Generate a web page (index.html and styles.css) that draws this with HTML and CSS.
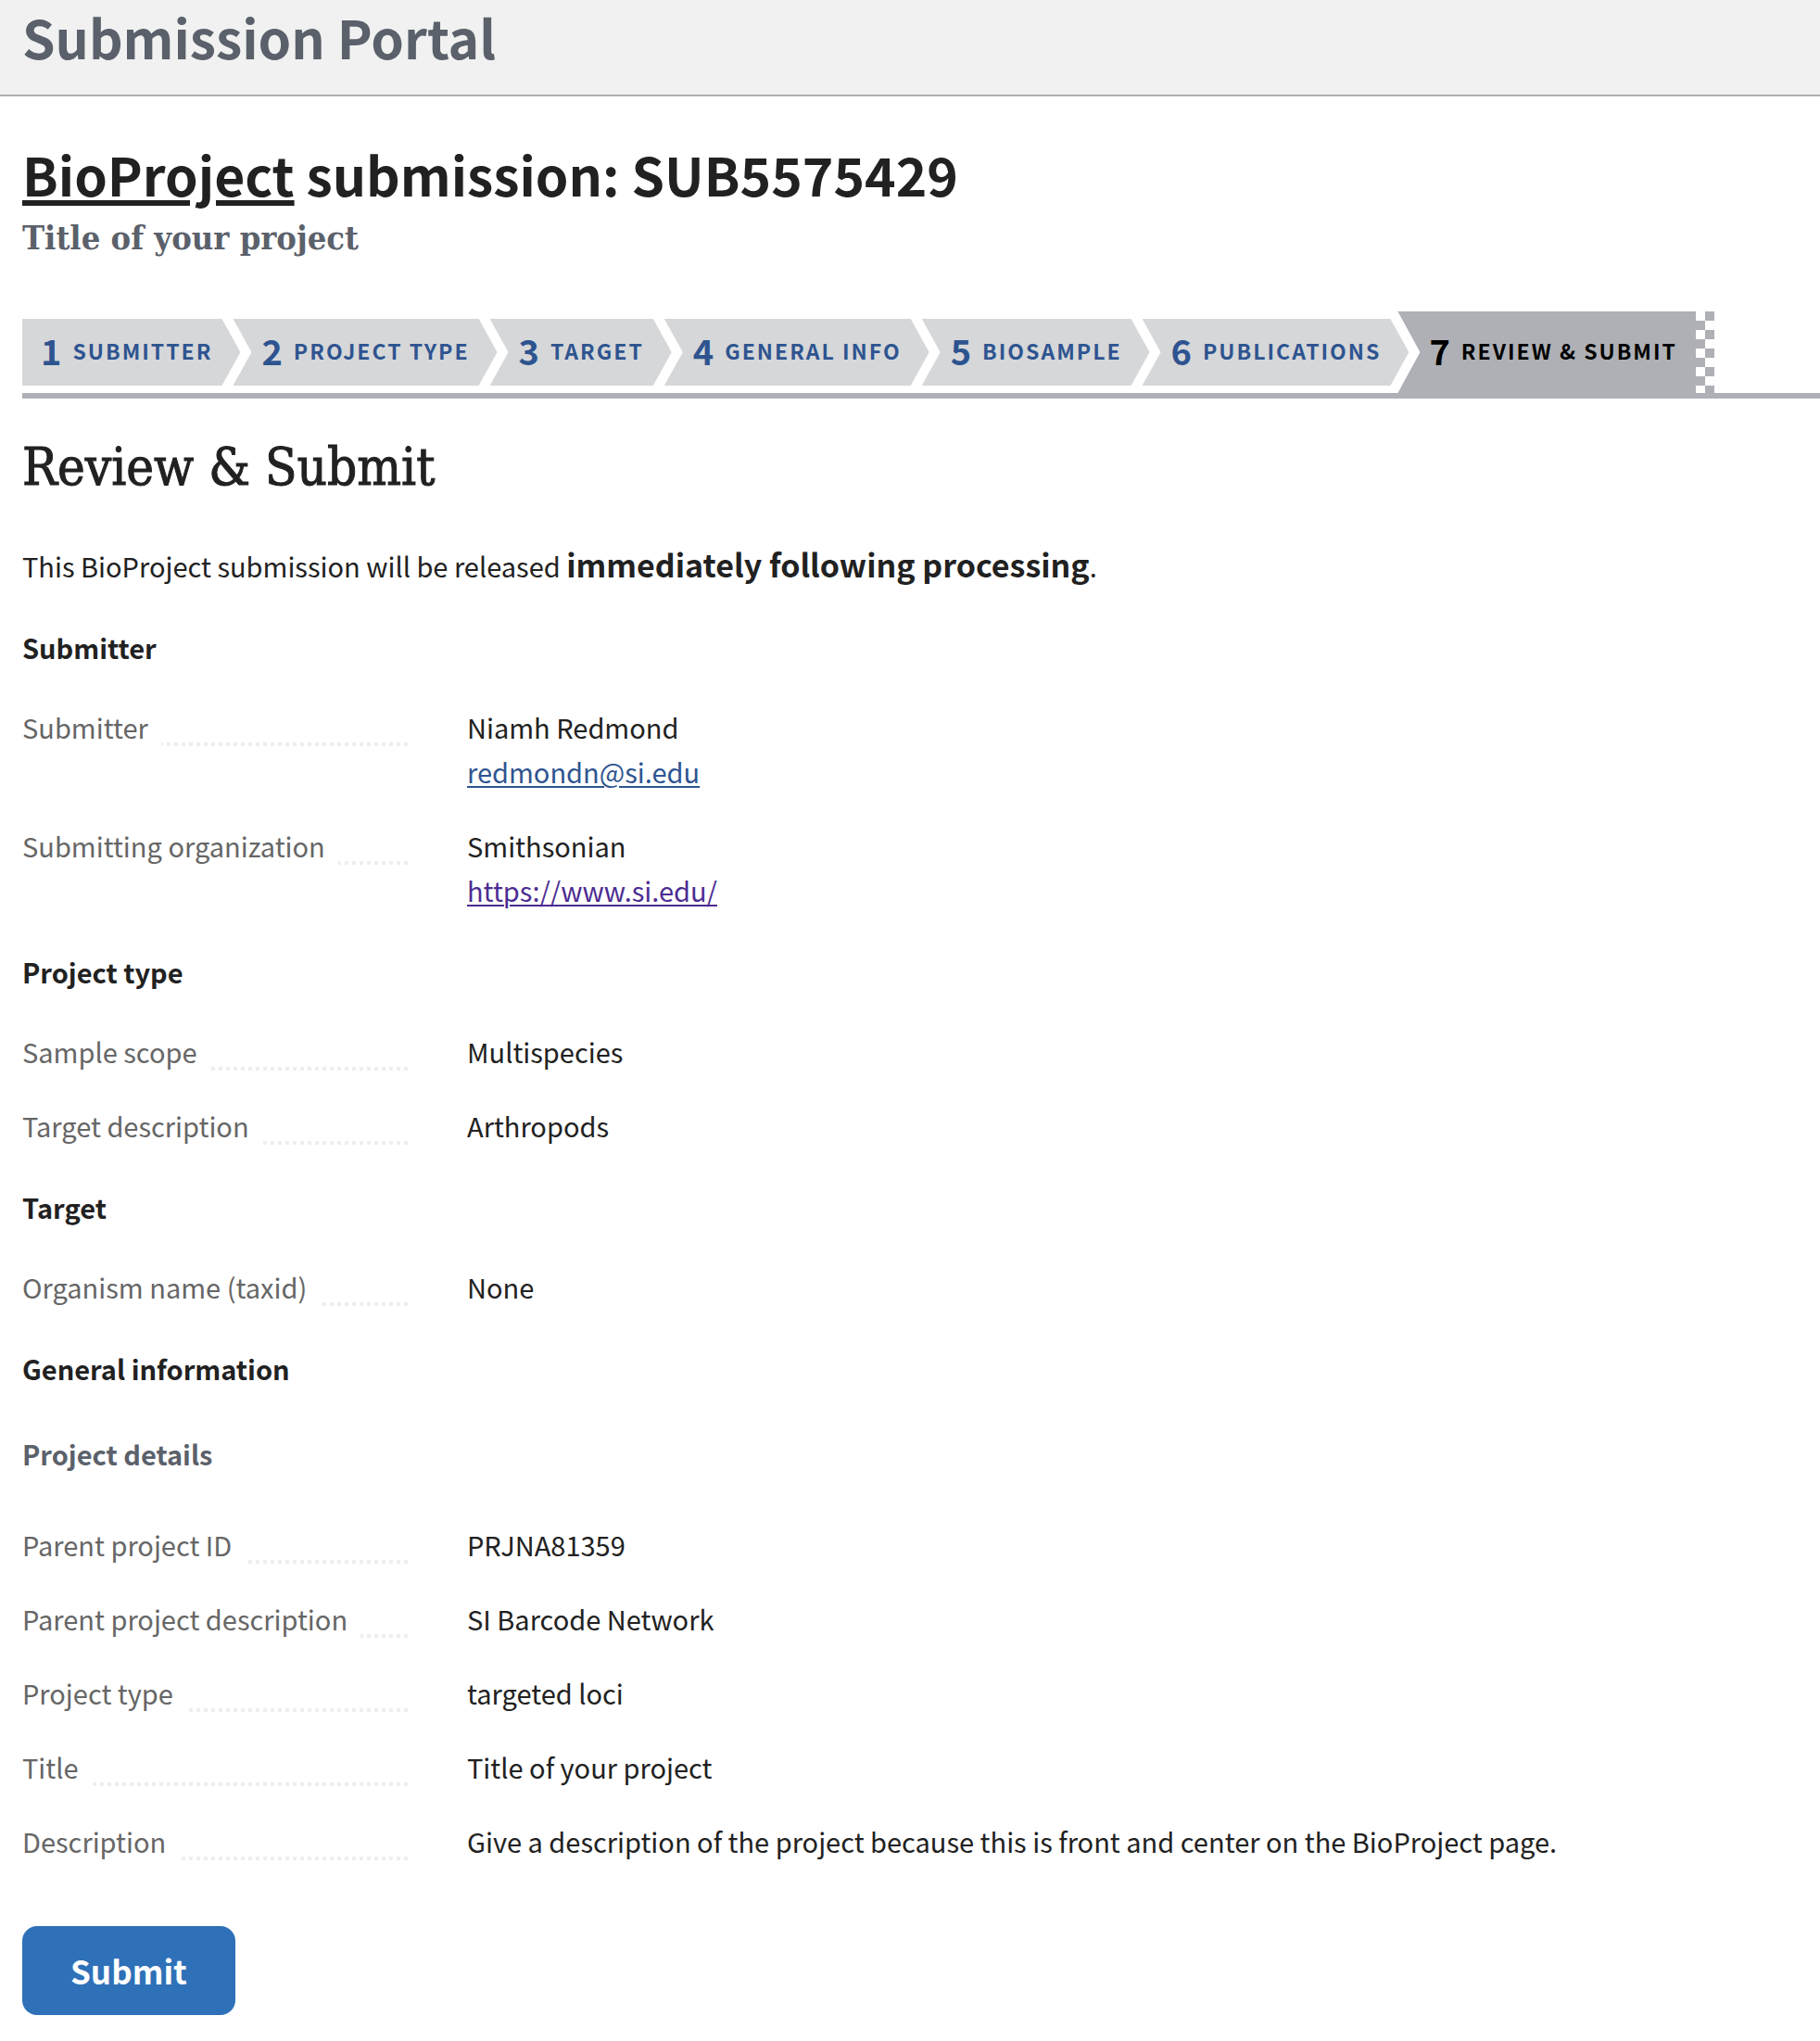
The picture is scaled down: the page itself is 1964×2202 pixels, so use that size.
FILE: index.html
```html
<!DOCTYPE html>
<html lang="en">
<head>
<meta charset="utf-8">
<title>Submission Portal</title>
<link rel="stylesheet" href="styles.css">
</head>
<body>
<header class="portal-header">
  <p class="portal-name">Submission Portal</p>
</header>
<main class="page">
  <h1 class="page-title"><a href="#">BioProject</a> submission: SUB5575429</h1>
  <p class="page-subtitle">Title of your project</p>

  <nav class="wizard" aria-label="Submission steps">
    <ol class="steps">
      <li><a class="step step-first" href="#"><span class="num">1</span> Submitter</a></li>
      <li><a class="step" href="#"><span class="num">2</span> Project type</a></li>
      <li><a class="step" href="#"><span class="num">3</span> Target</a></li>
      <li><a class="step" href="#"><span class="num">4</span> General info</a></li>
      <li><a class="step" href="#"><span class="num">5</span> BioSample</a></li>
      <li><a class="step" href="#"><span class="num">6</span> Publications</a></li>
      <li><a class="step step-current" href="#" aria-current="step"><span class="num">7</span> Review &amp; Submit</a></li>
    </ol>
  </nav>

  <h2 class="section-title">Review &amp; Submit</h2>
  <p class="release">This BioProject submission will be released <strong>immediately following processing</strong>.</p>

  <h3 class="group">Submitter</h3>
  <dl class="fields">
    <div class="field"><dt>Submitter</dt><dd>Niamh Redmond<br><a href="#">redmondn@si.edu</a></dd></div>
    <div class="field"><dt>Submitting organization</dt><dd>Smithsonian<br><a class="seen" href="#">https://www.si.edu/</a></dd></div>
  </dl>

  <h3 class="group">Project type</h3>
  <dl class="fields">
    <div class="field"><dt>Sample scope</dt><dd>Multispecies</dd></div>
    <div class="field"><dt>Target description</dt><dd>Arthropods</dd></div>
  </dl>

  <h3 class="group">Target</h3>
  <dl class="fields">
    <div class="field"><dt>Organism name (taxid)</dt><dd>None</dd></div>
  </dl>

  <h3 class="group">General information</h3>
  <h4 class="subgroup">Project details</h4>
  <dl class="fields">
    <div class="field"><dt>Parent project ID</dt><dd>PRJNA81359</dd></div>
    <div class="field"><dt>Parent project description</dt><dd>SI Barcode Network</dd></div>
    <div class="field"><dt>Project type</dt><dd>targeted loci</dd></div>
    <div class="field"><dt>Title</dt><dd>Title of your project</dd></div>
    <div class="field"><dt>Description</dt><dd>Give a description of the project because this is front and center on the BioProject page.</dd></div>
  </dl>

  <button class="submit" type="button">Submit</button>
</main>
</body>
</html>
```
FILE: styles.css
```css
* {
  box-sizing: border-box;
}

body {
  margin: 0;
  background: #fff;
  color: #212121;
  font-family: "Noto Sans CJK JP", "Open Sans", sans-serif;
  font-size: 29px;
  line-height: 48px;
}

h1, h2, h3, h4, p, dl, dd, ol {
  margin: 0;
  padding: 0;
}

.portal-header {
  padding: 0 24px 24px;
  background: #f1f1f1;
  border-bottom: 2px solid #aeb0b5;
}

.portal-name {
  color: #5b616b;
  font-size: 57px;
  font-weight: 700;
  line-height: 78px;
}

.page {
  padding: 48px 0 28px 24px;
}

.page-title {
  font-size: 57px;
  line-height: 70px;
}

.page-title a {
  color: inherit;
  text-decoration-thickness: 6px;
  text-underline-offset: 4px;
}

.page-subtitle {
  margin-top: 10px;
  color: #5b616b;
  font-family: "DejaVu Serif Condensed", "DejaVu Serif", serif;
  font-size: 36px;
  font-weight: 700;
  line-height: 48px;
}

.wizard {
  margin-top: 56px;
  border-bottom: 6px solid #aeb0b5;
}

.steps {
  display: flex;
  align-items: center;
  list-style: none;
}

.steps li {
  flex: none;
  margin-right: -8px;
}

.step {
  display: flex;
  align-items: center;
  gap: 12px;
  height: 72px;
  padding: 0 30px 4px 31px;
  background: #d6d7d9;
  clip-path: polygon(0 0, calc(100% - 20px) 0, 100% 50%, calc(100% - 20px) 100%, 0 100%, 20px 50%);
  color: #2e5490;
  font-size: 23px;
  font-weight: 700;
  letter-spacing: 2px;
  text-decoration: none;
  text-transform: uppercase;
}

.step-first {
  padding-left: 20px;
  clip-path: polygon(0 0, calc(100% - 20px) 0, 100% 50%, calc(100% - 20px) 100%, 0 100%);
}

.step .num {
  font-size: 38px;
  letter-spacing: 0;
}

.step-current {
  height: 88px;
  margin-left: -4px;
  padding: 0 40px 4px 34px;
  background:
    conic-gradient(#aeb0b5 25%, #fff 0 50%, #aeb0b5 0 75%, #fff 0) right top / 20px 20px repeat-y,
    #aeb0b5;
  clip-path: polygon(0 0, 100% 0, 100% 100%, 0 100%, 24px 50%);
  color: #000;
}

.section-title {
  margin-top: 38px;
  font-family: "DejaVu Serif Condensed", "DejaVu Serif", serif;
  font-size: 56px;
  font-weight: 400;
  line-height: 72px;
  -webkit-text-stroke: 1px currentColor;
}

.release {
  margin-top: 45px;
}

.release strong {
  font-size: 34px;
}

.group,
.subgroup {
  margin-top: 40px;
  font-size: 29px;
  font-weight: 700;
}

.subgroup {
  margin-top: 44px;
  color: #5b616b;
}

.fields {
  display: grid;
  gap: 32px;
  margin-top: 38px;
}

.subgroup + .fields {
  margin-top: 50px;
}

.field {
  display: grid;
  grid-template-columns: 416px 1fr;
  column-gap: 64px;
}

dt {
  display: flex;
  align-items: flex-start;
  gap: 14px;
  color: #666;
}

/* dotted leader between the label and its value */
dt::after {
  content: "";
  flex: 1;
  height: 4px;
  margin-top: 41px;
  background: repeating-linear-gradient(to left, #eee 0 4px, transparent 4px 8px);
}

dd a {
  color: #2e5490;
  text-decoration-thickness: 2px;
  text-underline-offset: 3px;
}

dd .seen {
  color: #4c2c92;
}

.submit {
  display: block;
  margin-top: 68px;
  padding: 0 52px;
  border: 0;
  border-radius: 16px;
  background: #2e71b8;
  color: #fff;
  font: 700 35px/96px "Noto Sans CJK JP", "Open Sans", sans-serif;
}
```
